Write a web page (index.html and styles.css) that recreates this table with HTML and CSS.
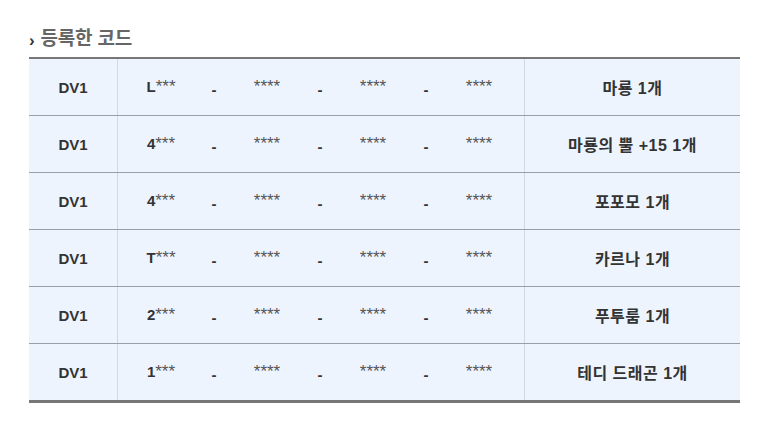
FILE: index.html
```html
<!DOCTYPE html>
<html lang="ko">
<head>
<meta charset="utf-8">
<link rel="stylesheet" href="styles.css">
</head>
<body>
<div class="wrap">
  <h2 class="title"><span class="chev">›</span>등록한 코드</h2>
  <table class="codes">
    <tr>
      <td class="type">DV1</td>
      <td class="code"><div class="parts"><span><b>L</b>***</span><span class="dash">-</span><span>****</span><span class="dash">-</span><span>****</span><span class="dash">-</span><span>****</span></div></td>
      <td class="reward">마룡 1개</td>
    </tr>
    <tr>
      <td class="type">DV1</td>
      <td class="code"><div class="parts"><span><b>4</b>***</span><span class="dash">-</span><span>****</span><span class="dash">-</span><span>****</span><span class="dash">-</span><span>****</span></div></td>
      <td class="reward">마룡의 뿔 +15 1개</td>
    </tr>
    <tr>
      <td class="type">DV1</td>
      <td class="code"><div class="parts"><span><b>4</b>***</span><span class="dash">-</span><span>****</span><span class="dash">-</span><span>****</span><span class="dash">-</span><span>****</span></div></td>
      <td class="reward">포포모 1개</td>
    </tr>
    <tr>
      <td class="type">DV1</td>
      <td class="code"><div class="parts"><span><b>T</b>***</span><span class="dash">-</span><span>****</span><span class="dash">-</span><span>****</span><span class="dash">-</span><span>****</span></div></td>
      <td class="reward">카르나 1개</td>
    </tr>
    <tr>
      <td class="type">DV1</td>
      <td class="code"><div class="parts"><span><b>2</b>***</span><span class="dash">-</span><span>****</span><span class="dash">-</span><span>****</span><span class="dash">-</span><span>****</span></div></td>
      <td class="reward">푸투룸 1개</td>
    </tr>
    <tr>
      <td class="type">DV1</td>
      <td class="code"><div class="parts"><span><b>1</b>***</span><span class="dash">-</span><span>****</span><span class="dash">-</span><span>****</span><span class="dash">-</span><span>****</span></div></td>
      <td class="reward">테디 드래곤 1개</td>
    </tr>
  </table>
</div>
</body>
</html>
```

FILE: styles.css
```css
html, body {
  margin: 0;
  padding: 0;
  background: #fff;
}
body {
  font-family: "Liberation Sans", "Noto Sans CJK KR", sans-serif;
  color: #333;
}
.wrap {
  padding: 27px 0 0 29px;
  width: 711px;
}
.title {
  margin: 0 0 7px 0;
  height: 23px;
  font-size: 19px;
  line-height: 23px;
  font-weight: bold;
  color: #666;
  letter-spacing: -0.2px;
  display: flex;
  align-items: center;
}
.chev {
  font-size: 17px;
  font-weight: 900;
  color: #333;
  margin-right: 6px;
  margin-top: 3px;
}
.codes {
  width: 711px;
  border-collapse: collapse;
  border-top: 2px solid #777;
  border-bottom: 3px solid #777;
  font-size: 15px;
  font-weight: bold;
}
.codes td {
  height: 56px;
  padding: 0;
  background: #eef4fe;
  border-bottom: 1px solid #9b9ea6;
  text-align: center;
  vertical-align: middle;
  color: #333;
}
.codes tr:last-child td {
  border-bottom: none;
}
.codes td.type {
  width: 88px;
  border-right: 1px solid #d3d7df;
}
.codes td.code {
  width: 406px;
  border-right: 1px solid #d3d7df;
}
.parts {
  display: grid;
  grid-template-columns: repeat(7, 53px);
  justify-content: center;
  align-items: baseline;
  padding-right: 2px;
  color: #555;
  font-weight: normal;
  font-size: 17px;
  line-height: 20px;
}
.parts b {
  font-weight: bold;
  font-size: 15px;
  color: #333;
}
.parts .dash {
  font-weight: bold;
  font-size: 15px;
  color: #333;
  position: relative;
  top: 3px;
}
.codes td.reward {
  color: #333;
  font-size: 16px;
  letter-spacing: 0.5px;
}
```
